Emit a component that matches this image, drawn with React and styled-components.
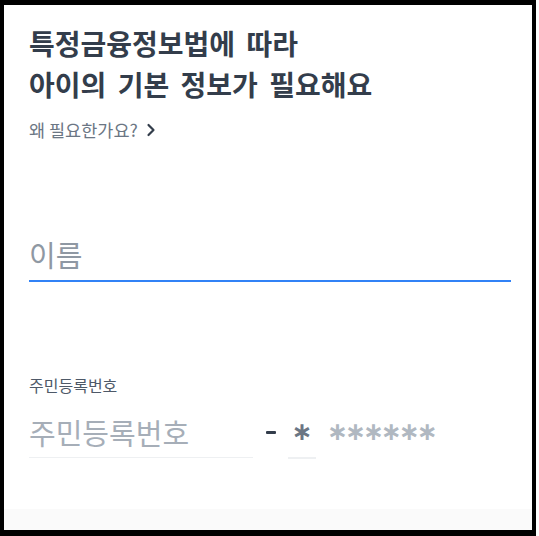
import React from "react";
import styled, { createGlobalStyle } from "styled-components";

const Global = createGlobalStyle`
  html, body { margin: 0; padding: 0; background: #ffffff; }
  body { font-family: "Noto Sans CJK KR", "Noto Sans", sans-serif; }
  * { box-sizing: border-box; }
`;

const Frame = styled.div`
  width: 536px;
  height: 536px;
  border-style: solid;
  border-color: #000;
  border-width: 5px 4px 6px 4px;
  background: #fff;
  display: flex;
  flex-direction: column;
  padding: 18px 21px 0 25px;
  position: relative;
  overflow: hidden;
`;

const Title = styled.h1`
  margin: 0;
  font-size: 28px;
  line-height: 41px;
  font-weight: 700;
  color: #333d4b;
  word-spacing: 5px;
  letter-spacing: 0;
`;

const Why = styled.div`
  margin-top: 13px;
  display: flex;
  align-items: center;
  gap: 8px;
  font-size: 17.5px;
  line-height: 24px;
  color: #6b7684;
`;

const Chevron = styled.svg`
  width: 10px;
  height: 14px;
`;

const Field = styled.div`
  display: flex;
  flex-direction: column;
  margin-top: ${(p) => p.$top}px;
`;

const Placeholder = styled.div`
  font-size: 29px;
  line-height: 40px;
  color: ${(p) => p.$color || "#8f98a3"};
  padding-bottom: ${(p) => p.$pb || 0}px;
  border-bottom: ${(p) => p.$line || "none"};
  white-space: nowrap;
`;

const Label = styled.div`
  font-size: 16px;
  line-height: 22px;
  color: #4e5968;
  margin-bottom: 16px;
`;

const RrnRow = styled.div`
  display: flex;
  align-items: flex-start;
`;

const Front = styled(Placeholder)`
  width: 224px;
`;

const Dash = styled.div`
  width: 35px;
  height: 40px;
  display: flex;
  justify-content: center;
  align-items: center;
  &::before {
    content: "";
    width: 10px;
    height: 3px;
    border-radius: 1px;
    background: #333d4b;
  }
`;

const Star = styled.div`
  font-family: "DejaVu Sans", sans-serif;
  font-weight: 700;
  font-size: 25px;
  line-height: 40px;
  color: ${(p) => p.$color};
  letter-spacing: ${(p) => p.$ls || 0}px;
  width: ${(p) => (p.$w ? p.$w + "px" : "auto")};
  text-align: center;
  margin-left: ${(p) => p.$ml || 0}px;
  padding-bottom: ${(p) => p.$pb || 0}px;
  border-bottom: ${(p) => p.$line || "none"};
  white-space: nowrap;
`;

const Fade = styled.div`
  position: absolute;
  left: 0;
  right: 0;
  bottom: 0;
  height: 21px;
  background: #fafafa;
`;

export default function App() {
  return (
    <>
      <Global />
      <Frame>
        <Title>
          특정금융정보법에 따라
          <br />
          아이의 기본 정보가 필요해요
        </Title>
        <Why>
          왜 필요한가요?
          <Chevron viewBox="0 0 10 14">
            <path d="M2.5 2 L7.5 7 L2.5 12" fill="none" stroke="#333d4b" strokeWidth="2.2" strokeLinecap="round" strokeLinejoin="round" />
          </Chevron>
        </Why>
        <Field $top={92}>
          <Placeholder $line="2px solid #3182f6" $pb={6}>이름</Placeholder>
        </Field>
        <Field $top={92}>
          <Label>주민등록번호</Label>
          <RrnRow>
            <Front $line="1px solid #eef0f2" $pb={5} $color="#a6aeb8">
              주민등록번호
            </Front>
            <Dash />
            <Star $w={28} $color="#6b7684" $line="2px solid #eef0f2" $pb={5}>∗</Star>
            <Star $color="#b0b8c1" $ml={11} $ls={-3}>∗∗∗∗∗∗</Star>
          </RrnRow>
        </Field>
        <Fade />
      </Frame>
    </>
  );
}
